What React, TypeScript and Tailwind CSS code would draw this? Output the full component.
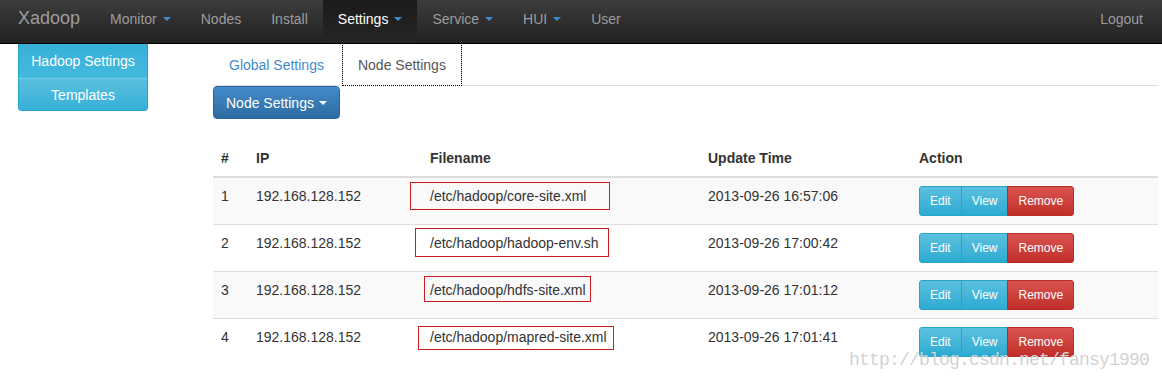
import React from "react";

const Caret = ({ white }: { white?: boolean }) => (
  <span
    className={
      "inline-block w-0 h-0 align-middle border-x-[4px] border-x-transparent border-t-[4px] " +
      (white ? "ml-[5px] border-t-white" : "ml-[6px] border-t-[#428bca]")
    }
  />
);

const NavItem = ({ label, caret, active }: { label: string; caret?: boolean; active?: boolean }) => (
  <div
    className={
      "flex items-start px-[15px] pt-[9px] leading-[20px] " +
      (active ? "bg-gradient-to-b from-[#1b1b1b] to-[#262626] text-white" : "text-[#9d9d9d]")
    }
  >
    <span>{label}</span>
    {caret && (
      <span className="flex h-[20px] items-center">
        <Caret />
      </span>
    )}
  </div>
);

type Row = { n: string; ip: string; file: string; time: string; box: { l: number; t: number; w: number; h: number } };

const rows: Row[] = [
  { n: "1", ip: "192.168.128.152", file: "/etc/hadoop/core-site.xml", time: "2013-09-26 16:57:06", box: { l: -12, t: 4, w: 200, h: 28 } },
  { n: "2", ip: "192.168.128.152", file: "/etc/hadoop/hadoop-env.sh", time: "2013-09-26 17:00:42", box: { l: -7, t: 3, w: 194, h: 29 } },
  { n: "3", ip: "192.168.128.152", file: "/etc/hadoop/hdfs-site.xml", time: "2013-09-26 17:01:12", box: { l: 2, t: 4, w: 167, h: 26 } },
  { n: "4", ip: "192.168.128.152", file: "/etc/hadoop/mapred-site.xml", time: "2013-09-26 17:01:41", box: { l: -4, t: 7, w: 196, h: 24 } },
];

export default function App() {
  return (
    <div className="relative w-[1162px] h-[381px] overflow-hidden bg-white font-['Liberation_Sans',Arial,sans-serif] text-[14px] text-[#333]">
      {/* Navbar */}
      <nav className="relative z-10 flex h-[44px] items-stretch border-b border-black bg-gradient-to-b from-[#3c3c3c] to-[#222]">
        <div className="pl-[18px] pr-[15px] pt-[7px] text-[18px] leading-[22px] text-[#9d9d9d]">Xadoop</div>
        <NavItem label="Monitor" caret />
        <NavItem label="Nodes" />
        <NavItem label="Install" />
        <NavItem label="Settings" caret active />
        <NavItem label="Service" caret />
        <NavItem label="HUI" caret />
        <NavItem label="User" />
        <div className="ml-auto mr-[4px] flex">
          <NavItem label="Logout" />
        </div>
      </nav>

      <div className="flex">
        {/* Sidebar */}
        <div className="w-[213px] pl-[18px]">
          <div className="w-[130px] text-white text-center leading-[20px]">
            <div className="h-[34px] pt-[7px] border-x border-[#28a4c9] bg-gradient-to-b from-[#35b0d8] to-[#45b9de]">
              Hadoop Settings
            </div>
            <div className="h-[33px] pt-[6px] border-x border-b border-t border-[#28a4c9] border-t-[#6cc8e3] rounded-b-[4px] bg-gradient-to-b from-[#58bfdf] to-[#34b1d7]">
              Templates
            </div>
          </div>
        </div>

        {/* Main */}
        <div className="w-[945px]">
          <ul className="flex border-b border-[#ddd]">
            <li className="-mb-px mr-[2px] border border-transparent px-[15px] py-[10px] leading-[20px] text-[#428bca]">
              Global Settings
            </li>
            <li className="-mt-px -mb-px border border-[#ddd] border-b-transparent bg-white px-[15px] pt-[11px] pb-[10px] leading-[20px] text-[#555] outline-1 outline-dotted outline-black -outline-offset-1">
              Node Settings
            </li>
          </ul>

          <div>
            <button className="flex items-center h-[33px] px-[12px] rounded-[4px] border border-[#2b669a] bg-gradient-to-b from-[#428bca] to-[#2d6ca2] text-white leading-[20px]">
              Node Settings
              <Caret white />
            </button>
          </div>

          <table className="mt-[21px] w-full table-fixed border-collapse">
            <colgroup>
              <col className="w-[35px]" />
              <col className="w-[174px]" />
              <col className="w-[278px]" />
              <col className="w-[211px]" />
              <col />
            </colgroup>
            <thead>
              <tr>
                {["#", "IP", "Filename", "Update Time", "Action"].map((h) => (
                  <th key={h} className="p-[8px] text-left align-bottom font-bold leading-[20px] border-b-2 border-[#ddd]">
                    {h}
                  </th>
                ))}
              </tr>
            </thead>
            <tbody>
              {rows.map((r, i) => (
                <tr key={r.n} className={i % 2 === 0 ? "bg-[#f9f9f9]" : "bg-white"}>
                  <td className="p-[8px] align-top leading-[20px] border-t border-[#ddd]">{r.n}</td>
                  <td className="p-[8px] align-top leading-[20px] border-t border-[#ddd]">{r.ip}</td>
                  <td className="relative p-[8px] align-top leading-[20px] border-t border-[#ddd]">
                    {r.file}
                    <span
                      className="absolute border-[1.5px] border-[#cc1a22]"
                      style={{ left: r.box.l, top: r.box.t, width: r.box.w, height: r.box.h }}
                    />
                  </td>
                  <td className="p-[8px] align-top leading-[20px] border-t border-[#ddd]">{r.time}</td>
                  <td className="p-[8px] align-top leading-[20px] border-t border-[#ddd]">
                    <div className="flex text-[12px] leading-[18px] text-white">
                      <span className="px-[10px] py-[5px] border border-[#28a4c9] rounded-l-[3px] bg-gradient-to-b from-[#5bc0de] to-[#2aabd2]">
                        Edit
                      </span>
                      <span className="-ml-px px-[10px] py-[5px] border border-[#28a4c9] bg-gradient-to-b from-[#5bc0de] to-[#2aabd2]">
                        View
                      </span>
                      <span className="-ml-px px-[10px] py-[5px] border border-[#b92c28] rounded-r-[3px] bg-gradient-to-b from-[#d9534f] to-[#c12e2a]">
                        Remove
                      </span>
                    </div>
                  </td>
                </tr>
              ))}
            </tbody>
          </table>
        </div>
      </div>

      {/* Watermark */}
      <div className="absolute left-[849px] top-[351px] font-['Liberation_Mono',monospace] text-[18px] leading-[18px] tracking-[-0.8px] text-[#d2d2d2] whitespace-nowrap">
        http://blog.csdn.net/fansy1990
      </div>
    </div>
  );
}
